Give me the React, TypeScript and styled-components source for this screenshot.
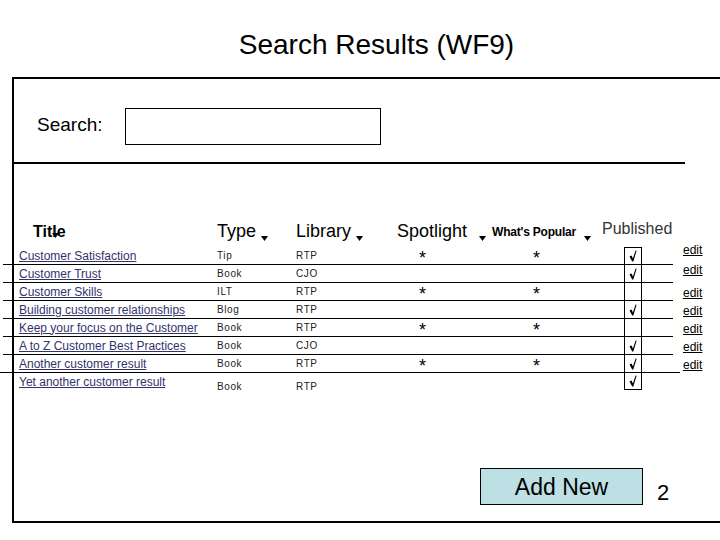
import React from 'react'
import styled, { createGlobalStyle } from 'styled-components'

const GlobalStyle = createGlobalStyle`
  html, body {
    margin: 0;
    padding: 0;
    background: #fff;
    overflow: hidden;
  }
  body {
    font-family: 'Liberation Sans', Arial, sans-serif;
    color: #000;
  }
`

type Result = {
  title: string
  type: string
  library: string
  starred?: boolean
  published?: boolean
}

const results: Result[] = [
  { title: 'Customer Satisfaction', type: 'Tip', library: 'RTP', starred: true, published: true },
  { title: 'Customer Trust', type: 'Book', library: 'CJO', published: true },
  { title: 'Customer Skills', type: 'ILT', library: 'RTP', starred: true },
  { title: 'Building customer relationships', type: 'Blog', library: 'RTP', published: true },
  { title: 'Keep your focus on the Customer', type: 'Book', library: 'RTP', starred: true },
  { title: 'A to Z Customer Best Practices', type: 'Book', library: 'CJO', published: true },
  { title: 'Another customer result', type: 'Book', library: 'RTP', starred: true, published: true },
  { title: 'Yet another customer result', type: 'Book', library: 'RTP', published: true },
]

// the edit links don't line up with the rows in the wireframe
const editGaps = [-3, 7, 10, 5, 5, 5, 5]

const DownArrow = () => (
  <svg width="7" height="5" viewBox="0 0 7 5">
    <polygon points="0,0 7,0 3.5,5" fill="#000" />
  </svg>
)

const Check = () => (
  <svg width="8" height="12" viewBox="0 0 8 12">
    <path d="M0.5 6.6 L2.6 5.4 L3.9 8.4 L6.6 0.4 L7.6 0.8 L4.3 11.6 L3.2 11.6 Z" fill="#000" />
  </svg>
)

const App: React.FC = () => {
  return (
    <>
      <GlobalStyle />
      <Page>
        <Heading>Search Results (WF9)</Heading>
        <Frame>
          <SearchRow>
            <SearchLabel>Search:</SearchLabel>
            <SearchBox />
          </SearchRow>
          <Divider />

          <HeaderRow>
            <TitleHead>
              Title
              <TitleArrow>
                <DownArrow />
              </TitleArrow>
            </TitleHead>
            <HeadCell>
              Type
              <ArrowSlot>
                <DownArrow />
              </ArrowSlot>
            </HeadCell>
            <HeadCell>
              Library
              <ArrowSlot>
                <DownArrow />
              </ArrowSlot>
            </HeadCell>
            <HeadCell>
              Spotlight
              <ArrowSlot $gap={12}>
                <DownArrow />
              </ArrowSlot>
            </HeadCell>
            <HeadCell $small>
              What's Popular
              <ArrowSlot $gap={8}>
                <DownArrow />
              </ArrowSlot>
            </HeadCell>
            <PublishedHead>Published</PublishedHead>
          </HeaderRow>

          <ResultsBody>
            <Rows>
              {results.map((r, i) => (
                <Row key={r.title} $long={i === 6} $last={i === results.length - 1}>
                  <TitleCell>
                    <TitleLink href="#">{r.title}</TitleLink>
                  </TitleCell>
                  <SmallCell $drop={i === results.length - 1}>{r.type}</SmallCell>
                  <SmallCell $drop={i === results.length - 1}>{r.library}</SmallCell>
                  <StarCell $indent={22}>{r.starred ? '*' : ''}</StarCell>
                  <StarCell $indent={41}>{r.starred ? '*' : ''}</StarCell>
                  <PubCell $first={i === 0} $last={i === results.length - 1}>
                    {r.published && <Check />}
                  </PubCell>
                  <span />
                </Row>
              ))}
            </Rows>
            <EditColumn>
              {editGaps.map((g, i) => (
                <EditLink key={i} href="#" $gap={g}>
                  edit
                </EditLink>
              ))}
            </EditColumn>
          </ResultsBody>

          <Footer>
            <AddButton>Add New</AddButton>
            <PageNumber>2</PageNumber>
          </Footer>
        </Frame>
      </Page>
    </>
  )
}

const Page = styled.div`
  width: 720px;
  height: 540px;
  overflow: hidden;
`

const Heading = styled.h1`
  margin: 29px 0 16px;
  padding-left: 33px;
  height: 32px;
  font-size: 28px;
  line-height: 32px;
  font-weight: normal;
  text-align: center;
`

const Frame = styled.div`
  box-sizing: border-box;
  margin-left: 12px;
  height: 446px;
  border-top: 2px solid #000;
  border-left: 2px solid #000;
  border-bottom: 2px solid #000;
`

const SearchRow = styled.div`
  display: flex;
  align-items: center;
  margin-top: 29px;
  height: 37px;
`

const SearchLabel = styled.span`
  margin-left: 23px;
  width: 88px;
  font-size: 19px;
  line-height: 22px;
  margin-top: -3px;
`

const SearchBox = styled.div`
  box-sizing: border-box;
  width: 256px;
  height: 37px;
  border: 1px solid #000;
`

const Divider = styled.div`
  margin-top: 17px;
  width: 671px;
  height: 2px;
  background: #000;
`

const HeaderRow = styled.div`
  display: grid;
  grid-template-columns: 214px 79px 101px 95px 110px 1fr;
  margin: 52px 0 0 -11px;
  height: 31px;
`

const HeadCell = styled.div<{ $small?: boolean }>`
  display: flex;
  align-items: center;
  white-space: nowrap;
  font-size: ${p => (p.$small ? '12px' : '18px')};
  font-weight: ${p => (p.$small ? 'bold' : 'normal')};
  letter-spacing: ${p => (p.$small ? '-0.2px' : '0')};
`

const ArrowSlot = styled.span<{ $gap?: number }>`
  display: flex;
  margin-left: ${p => p.$gap ?? 5}px;
  margin-top: 14px;
`

const TitleHead = styled.div`
  position: relative;
  display: flex;
  align-items: center;
  padding-left: 30px;
  font-size: 16px;
  font-weight: bold;
  line-height: 18px;
`

const TitleArrow = styled.span`
  position: absolute;
  left: 49px;
  top: 17px;
  display: flex;
`

const PublishedHead = styled.div`
  display: flex;
  align-items: center;
  margin-top: -5px;
  font-size: 16px;
  color: #333;
  white-space: nowrap;
`

const ResultsBody = styled.div`
  display: flex;
  align-items: flex-start;
`

const Rows = styled.div`
  width: 670px;
  margin-left: -11px;
  flex-shrink: 0;
`

const Row = styled.div<{ $long?: boolean; $last?: boolean }>`
  box-sizing: border-box;
  display: grid;
  grid-template-columns: 214px 79px 101px 95px 132px 18px 1fr;
  grid-template-rows: 17px;
  height: 18px;
  width: ${p => (p.$long ? '680px' : '670px')};
  margin-left: ${p => (p.$long ? '-3px' : '0')};
  padding-left: ${p => (p.$long ? '3px' : '0')};
  border-bottom: ${p => (p.$last ? 'none' : '1px solid #000')};
`

const TitleCell = styled.div`
  display: flex;
  align-items: center;
  padding-left: 16px;
  white-space: nowrap;
`

const TitleLink = styled.a`
  font-size: 12px;
  line-height: 14px;
  color: #33336b;
  text-decoration: underline;
`

const SmallCell = styled.div<{ $drop?: boolean }>`
  display: flex;
  align-items: center;
  padding-top: ${p => (p.$drop ? '10px' : '0')};
  font-size: 10px;
  line-height: 12px;
  letter-spacing: 0.6px;
  color: #222;
`

const StarCell = styled.div<{ $indent: number }>`
  display: flex;
  align-items: center;
  padding: 5px 0 0 ${p => p.$indent}px;
  font-size: 18px;
  line-height: 12px;
  overflow: visible;
`

const PubCell = styled.div<{ $first?: boolean; $last?: boolean }>`
  box-sizing: border-box;
  display: flex;
  align-items: center;
  justify-content: center;
  border-left: 1px solid #000;
  border-right: 1px solid #000;
  border-top: ${p => (p.$first ? '1px solid #000' : 'none')};
  border-bottom: ${p => (p.$last ? '1px solid #000' : 'none')};
`

const EditColumn = styled.div`
  display: flex;
  flex-direction: column;
  margin-left: 10px;
`

const EditLink = styled.a<{ $gap: number }>`
  margin-top: ${p => p.$gap}px;
  font-size: 12px;
  line-height: 13px;
  color: #000;
  text-decoration: underline;
`

const Footer = styled.div`
  display: flex;
  align-items: flex-start;
  margin-top: 77px;
  padding-left: 466px;
`

const AddButton = styled.button`
  box-sizing: border-box;
  width: 163px;
  height: 37px;
  padding: 0;
  border: 1px solid #000;
  background: #bde0e5;
  font-family: inherit;
  font-size: 23px;
  line-height: 26px;
  color: #000;
`

const PageNumber = styled.span`
  margin: 12px 0 0 14px;
  font-size: 22px;
  line-height: 25px;
`

export default App
